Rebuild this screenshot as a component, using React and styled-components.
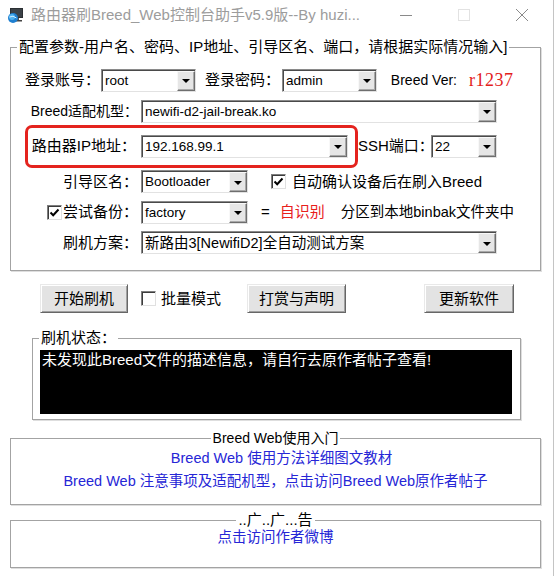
import React from "react";
import styled, { createGlobalStyle } from "styled-components";

const Global = createGlobalStyle`
  html, body { margin: 0; padding: 0; background: #fff; }
  body {
    font-family: "Liberation Sans", "Noto Sans CJK SC", sans-serif;
    color: #000;
  }
  * { box-sizing: border-box; }
`;

const CJK = `"Liberation Sans", "Noto Sans CJK SC", sans-serif`;

const Window = styled.div`
  width: 554px;
  height: 576px;
  background: #fff;
  border-right: 1px solid #c4c4c4;
  display: flex;
  flex-direction: column;
  overflow: hidden;
`;

const TitleBar = styled.div`
  height: 30px;
  flex-shrink: 0;
  display: flex;
  align-items: center;
  padding-left: 7px;
`;

const TitleText = styled.div`
  flex: 1;
  margin-left: 7px;
  font-family: ${CJK};
  font-size: 15px;
  line-height: 20px;
  color: #9c9c9c;
  white-space: nowrap;
`;

const WinButtons = styled.div`
  display: flex;
  margin-right: 2px;
`;

const WinBtn = styled.div`
  width: 58px;
  height: 30px;
  display: flex;
  align-items: center;
  justify-content: center;
`;

const Body = styled.div`
  flex: 1;
  display: flex;
  flex-direction: column;
  padding: 7px 12px 0 10px;
`;

const Group = styled.fieldset`
  margin: ${(p) => p.$m || "0"};
  padding: 0;
  border: 1px solid #a3a3a3;
  box-shadow: 1px 1px 0 #dedede;
  min-width: 0;
  flex-shrink: 0;
`;

const Legend = styled.legend`
  padding: 0 2px;
  margin: ${(p) => (p.$center ? "0 auto" : "0 0 0 6px")};
  font-family: ${CJK};
  font-size: ${(p) => p.$fs || 15}px;
  line-height: ${(p) => p.$lh || 20}px;
  color: #000;
  white-space: nowrap;
`;

const GroupContent = styled.div`
  display: flex;
  flex-direction: column;
  padding: ${(p) => p.$p || "0"};
  align-items: ${(p) => (p.$center ? "center" : "stretch")};
`;

const Row = styled.div`
  height: ${(p) => p.$h}px;
  display: flex;
  align-items: center;
`;

const Label = styled.div`
  width: ${(p) => p.$w}px;
  flex-shrink: 0;
  text-align: right;
  padding-right: ${(p) => (p.$pr == null ? 2 : p.$pr)}px;
  font-family: ${CJK};
  font-size: ${(p) => p.$fs || 15}px;
  line-height: 20px;
  white-space: nowrap;
`;

const Text = styled.span`
  margin-left: ${(p) => p.$ml || 0}px;
  font-family: ${CJK};
  font-size: ${(p) => p.$fs || 15}px;
  line-height: 20px;
  color: ${(p) => p.$color || "#000"};
  white-space: nowrap;
`;

const VerText = styled.span`
  margin-left: 12px;
  font-family: "Liberation Serif", "DejaVu Serif", serif;
  font-size: 18px;
  line-height: 20px;
  letter-spacing: 0.5px;
  color: #e3201b;
`;

const ComboBox = styled.div`
  width: ${(p) => p.$w}px;
  height: 23px;
  flex-shrink: 0;
  display: flex;
  background: #fff;
  border: 1px solid;
  border-color: #8a8a8a #e2e2e2 #e2e2e2 #8a8a8a;
  box-shadow: inset 1px 1px 0 #4a4a4a;
`;

const ComboValue = styled.div`
  flex: 1;
  min-width: 0;
  padding: 1px 0 0 3px;
  font-family: ${CJK};
  font-size: ${(p) => p.$fs || 13.5}px;
  line-height: 20px;
  white-space: nowrap;
  overflow: hidden;
`;

const DropBtn = styled.div`
  width: 18px;
  margin: 1px 0 0 0;
  background: #e6e6e6;
  border: 1px solid;
  border-color: #f8f8f8 #6e6e6e #6e6e6e #f8f8f8;
  box-shadow: inset -1px -1px 0 #a9a9a9;
  display: flex;
  align-items: center;
  justify-content: center;
  &::after {
    content: "";
    border-left: 4px solid transparent;
    border-right: 4px solid transparent;
    border-top: 4px solid #000;
    margin-top: 1px;
  }
`;

const Combo = ({ w, value, fs }) => (
  <ComboBox $w={w}>
    <ComboValue $fs={fs}>{value}</ComboValue>
    <DropBtn />
  </ComboBox>
);

const RedBox = styled.div`
  width: 333px;
  height: 43px;
  margin-left: 14px;
  flex-shrink: 0;
  display: flex;
  align-items: center;
  border: 3px solid #e4231e;
  border-radius: 7px;
`;

const CheckBox = styled.span`
  width: 15px;
  height: 15px;
  flex-shrink: 0;
  margin-left: ${(p) => p.$ml || 0}px;
  background: #fff;
  border: 1px solid;
  border-color: #7e7e7e #e0e0e0 #e0e0e0 #7e7e7e;
  box-shadow: inset 1px 1px 0 #3c3c3c;
  display: flex;
  align-items: center;
  justify-content: center;
`;

const Check = ({ checked, ml }) => (
  <CheckBox $ml={ml}>
    {checked && (
      <svg width="11" height="11" viewBox="0 0 11 11">
        <path d="M1.5 5.5 L4.2 8.2 L9.5 2.5" fill="none" stroke="#000" strokeWidth="2" />
      </svg>
    )}
  </CheckBox>
);

const ButtonRow = styled.div`
  display: flex;
  align-items: center;
  margin-top: 13px;
  padding-left: 30px;
  height: 29px;
  flex-shrink: 0;
`;

const Button = styled.button`
  width: ${(p) => p.$w}px;
  height: 29px;
  margin-left: ${(p) => p.$ml || 0}px;
  flex-shrink: 0;
  padding: 0;
  background: #e3e3e3;
  border: 1px solid;
  border-color: #e9e9e9 #666 #666 #e9e9e9;
  box-shadow: inset 1px 1px 0 #fff, inset -1px -1px 0 #a0a0a0;
  font-family: ${CJK};
  font-size: 15px;
  line-height: 20px;
  color: #000;
`;

const Console = styled.div`
  height: 64px;
  background: #000;
  color: #fff;
  padding: 0 2px;
  font-family: ${CJK};
  font-size: 15px;
  line-height: 20px;
  white-space: nowrap;
`;

const LinkText = styled.div`
  margin-top: ${(p) => p.$mt || 0}px;
  padding-left: ${(p) => p.$pl || 0}px;
  font-family: ${CJK};
  font-size: 14.5px;
  line-height: ${(p) => p.$lh || 23}px;
  color: #2626d6;
  white-space: nowrap;
  cursor: pointer;
`;

const AppIcon = () => (
  <svg width="17" height="17" viewBox="0 0 17 17">
    <rect x="3" y="1" width="13" height="10" fill="#2b2f33" />
    <rect x="4" y="2" width="11" height="8" fill="#3b4248" />
    <rect x="8" y="11" width="4" height="2" fill="#555" />
    <rect x="6" y="13" width="9" height="1.5" fill="#444" />
    <circle cx="6" cy="11" r="5" fill="#1e7fd0" />
    <circle cx="5" cy="10" r="3" fill="#4fb2f0" />
    <path d="M2.5 10 Q6 8 9.5 11" stroke="#cfeeff" strokeWidth="1" fill="none" />
  </svg>
);

export default function App() {
  return (
    <>
      <Global />
      <Window>
        <TitleBar>
          <AppIcon />
          <TitleText>路由器刷Breed_Web控制台助手v5.9版--By huzi...</TitleText>
          <WinButtons>
            <WinBtn>
              <svg width="14" height="14" viewBox="0 0 14 14">
                <path d="M1 7.5 H13" stroke="#8a8a8a" strokeWidth="1" />
              </svg>
            </WinBtn>
            <WinBtn>
              <svg width="14" height="14" viewBox="0 0 14 14">
                <rect x="1.5" y="1.5" width="11" height="11" fill="none" stroke="#e2e2e2" strokeWidth="1" />
              </svg>
            </WinBtn>
            <WinBtn>
              <svg width="14" height="14" viewBox="0 0 14 14">
                <path d="M1 1 L13 13 M13 1 L1 13" stroke="#8a8a8a" strokeWidth="1" />
              </svg>
            </WinBtn>
          </WinButtons>
        </TitleBar>

        <Body>
          <Group>
            <Legend>配置参数-用户名、密码、IP地址、引导区名、端口，请根据实际情况输入]</Legend>
            <GroupContent $p="7px 0 12px 0">
              <Row $h={32}>
                <Label $w={90} $pr={1}>登录账号：</Label>
                <Combo w={95} value="root" />
                <Label $w={86}>登录密码：</Label>
                <Combo w={95} value="admin" />
                <Label $w={80} $fs={14} $pr={0}>Breed Ver:</Label>
                <VerText>r1237</VerText>
              </Row>
              <Row $h={30}>
                <Label $w={130} $fs={14} $pr={3}>Breed适配机型：</Label>
                <Combo w={356} value="newifi-d2-jail-break.ko" />
              </Row>
              <Row $h={40}>
                <RedBox>
                  <Label $w={113} $pr={5}>路由器IP地址：</Label>
                  <Combo w={207} value="192.168.99.1" />
                </RedBox>
                <Label $w={73} $pr={1}>SSH端口：</Label>
                <Combo w={66} value="22" />
              </Row>
              <Row $h={31}>
                <Label $w={130} $pr={3}>引导区名：</Label>
                <Combo w={107} value="Bootloader" />
                <Check checked ml={23} />
                <Text $ml={6}>自动确认设备后在刷入Breed</Text>
              </Row>
              <Row $h={30}>
                <Check checked ml={36} />
                <Label $w={79} $pr={3}>尝试备份：</Label>
                <Combo w={107} value="factory" />
                <Text $ml={13}>=</Text>
                <Text $ml={10} $color="#e8201c">自识别</Text>
                <Text $ml={16} $fs={14.5}>分区到本地binbak文件夹中</Text>
              </Row>
              <Row $h={31}>
                <Label $w={130} $pr={3}>刷机方案：</Label>
                <Combo w={356} value="新路由3[NewifiD2]全自动测试方案" fs={14.5} />
              </Row>
            </GroupContent>
          </Group>

          <ButtonRow>
            <Button $w={88}>开始刷机</Button>
            <Check ml={13} />
            <Text $ml={5}>批量模式</Text>
            <Button $w={99} $ml={26}>打赏与声明</Button>
            <Button $w={90} $ml={78}>更新软件</Button>
          </ButtonRow>

          <Group $m="15px 20px 0 22px">
            <Legend>刷机状态：</Legend>
            <GroupContent $p="2px 8px 5px 7px">
              <Console>未发现此Breed文件的描述信息，请自行去原作者帖子查看!</Console>
            </GroupContent>
          </Group>

          <Group $m="9px 0 0 0">
            <Legend $center $fs={14} $lh={18}>Breed Web使用入门</Legend>
            <GroupContent $p="0 0 11px 0" $center>
              <LinkText $pl={12}>Breed Web 使用方法详细图文教材</LinkText>
              <LinkText>Breed Web 注意事项及适配机型，点击访问Breed Web原作者帖子</LinkText>
            </GroupContent>
          </Group>

          <Group $m="6px 0 0 0">
            <Legend $center $lh={18}>..广..广...告</Legend>
            <GroupContent $p="0 0 19px 0" $center>
              <LinkText $mt={-3} $lh={22}>点击访问作者微博</LinkText>
            </GroupContent>
          </Group>
        </Body>
      </Window>
    </>
  );
}
